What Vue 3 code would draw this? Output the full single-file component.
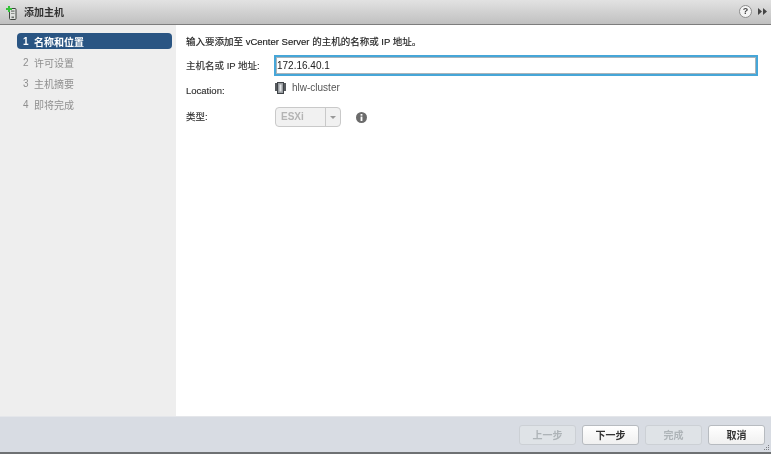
<script setup>
const steps = ['名称和位置', '许可设置', '主机摘要', '即将完成']
</script>

<template>
  <div class="dialog">
    <header class="titlebar">
      <svg class="host-icon" width="11" height="15" viewBox="0 0 11 15">
        <rect x="3.5" y="2.5" width="6.5" height="11" rx="1" fill="#dfe2df" stroke="#3f443f" />
        <rect x="5" y="4.5" width="3.5" height="1.2" fill="#6c716c" />
        <rect x="5" y="7" width="3.5" height="1" fill="#8e938e" />
        <rect x="5.5" y="10.5" width="2.5" height="1.6" fill="#6c716c" />
        <path d="M2 0h2v2h2v2H4v2H2V4H0V2h2z" fill="#35c23a" />
      </svg>
      <span class="title">添加主机</span>
      <span class="spacer"></span>
      <span class="help">?</span>
      <svg class="collapse" width="9" height="7" viewBox="0 0 9 7">
        <path d="M0 0l4 3.5L0 7zM5 0l4 3.5L5 7z" fill="#444" />
      </svg>
    </header>

    <div class="body">
      <nav class="sidebar">
        <div v-for="(s, i) in steps" :key="s" class="step" :class="{ active: i === 0 }">
          <span class="num">{{ i + 1 }}</span>
          <span>{{ s }}</span>
        </div>
      </nav>

      <main class="content">
        <p class="intro">输入要添加至 vCenter Server 的主机的名称或 IP 地址。</p>
        <div class="form">
          <label class="lbl raised">主机名或 IP 地址:</label>
          <input class="host-input" value="172.16.40.1" />

          <label class="lbl">Location:</label>
          <div class="loc">
            <svg width="11" height="12" viewBox="0 0 11 12">
              <rect x="0" y="1" width="3" height="8" fill="#55595d" />
              <rect x="8" y="1" width="3" height="8" fill="#55595d" />
              <rect x="2.5" y="0.5" width="6" height="11" fill="#9a9ea2" stroke="#3f4347" />
              <rect x="4.5" y="2.5" width="2" height="7" fill="#e4e6e8" />
            </svg>
            <span>hlw-cluster</span>
          </div>

          <label class="lbl raised">类型:</label>
          <div class="type-row">
            <div class="select">
              <span class="sel-text">ESXi</span>
              <span class="sel-arrow"></span>
            </div>
            <svg class="info" width="11" height="11" viewBox="0 0 12 12">
              <circle cx="6" cy="6" r="6" fill="#6b6b6b" />
              <rect x="5" y="2.2" width="2" height="1.8" fill="#fff" />
              <rect x="5" y="5" width="2" height="4.8" fill="#fff" />
            </svg>
          </div>
        </div>
      </main>
    </div>

    <footer class="footer">
      <button class="btn" disabled>上一步</button>
      <button class="btn">下一步</button>
      <button class="btn" disabled>完成</button>
      <button class="btn">取消</button>
      <svg class="grip" width="7" height="7" viewBox="0 0 7 7">
        <path d="M5 0h1v1H5zM3 2h1v1H3zM5 2h1v1H5zM1 4h1v1H1zM3 4h1v1H3zM5 4h1v1H5z" fill="#7d8085" />
      </svg>
    </footer>
  </div>
</template>

<style>
html, body { margin: 0; background: #fff; }
</style>

<style scoped>
.dialog {
  width: 771px;
  height: 454px;
  display: flex;
  flex-direction: column;
  box-sizing: border-box;
  border-bottom: 2px solid #6e7173;
  font: 10px "Liberation Sans", "Noto Sans CJK SC", sans-serif;
  color: #333;
  background: #fff;
  overflow: hidden;
  filter: blur(0.3px);
}
.titlebar {
  height: 25px;
  flex: none;
  box-sizing: border-box;
  display: flex;
  align-items: center;
  padding: 0 4px 2px 6px;
  background: linear-gradient(#e2e2e2, #c0c0c0);
  border-bottom: 1px solid #7d7d7d;
}
.host-icon { margin-right: 7px; margin-top: 5px; }
.title { font-weight: 700; color: #333; }
.spacer { flex: 1; }
.help {
  width: 11px;
  height: 11px;
  border-radius: 50%;
  background: #f4f4f4;
  border: 1px solid #8c8c8c;
  font-size: 9px;
  font-weight: 700;
  line-height: 11px;
  text-align: center;
  color: #444;
  margin-right: 6px;
}
.body { flex: 1; display: flex; min-height: 0; }
.sidebar {
  width: 176px;
  flex: none;
  box-sizing: border-box;
  background: #eee;
  padding: 8px 4px 0 17px;
}
.step {
  height: 16px;
  margin-bottom: 5px;
  display: flex;
  align-items: center;
  padding-left: 6px;
  border-radius: 4px;
  color: #8f8f8f;
}
.step.active {
  background: #2a5583;
  color: #fff;
  font-weight: 700;
}
.num { width: 11px; }
.content { flex: 1; padding: 10px 13px 0 10px; }
.intro { margin: 0; line-height: 14px; font-size: 9.5px; color: #222; -webkit-text-stroke: 0.15px #222; }
.form {
  margin-top: 6px;
  display: grid;
  grid-template-columns: 88px 1fr;
  grid-template-rows: 21px 22px 26px;
  align-items: center;
  row-gap: 3px;
}
.lbl { color: #333; font-size: 9.5px; -webkit-text-stroke: 0.15px #333; }
.lbl.raised { padding-bottom: 2px; white-space: nowrap; }
.host-input {
  width: 100%;
  height: 21px;
  box-sizing: border-box;
  border: 2px solid #46a6d8;
  outline: 1px solid #a9b4ba;
  outline-offset: -3px;
  padding: 0 0 1px 1px;
  font: 10px "Liberation Sans", sans-serif;
  color: #222;
}
.loc { display: flex; align-items: center; gap: 6px; margin-left: 1px; color: #555; margin-top: -5px; }
.type-row { display: flex; align-items: center; margin-left: 1px; }
.select {
  width: 66px;
  height: 20px;
  box-sizing: border-box;
  border: 1px solid #c9c9c9;
  border-radius: 4px;
  background: #f1f1f1;
  display: flex;
  align-items: center;
}
.sel-text {
  flex: 1;
  padding-left: 5px;
  color: #b4b4b4;
  font-weight: 700;
  line-height: 18px;
  border-right: 1px solid #c9c9c9;
}
.sel-arrow {
  width: 14px;
  display: flex;
  justify-content: center;
}
.sel-arrow::before {
  content: "";
  border: 3px solid transparent;
  border-top: 3px solid #999;
  border-bottom: 0;
}
.info { margin-left: 15px; }
.footer {
  height: 36px;
  flex: none;
  box-sizing: border-box;
  background: #d8dce3;
  border-top: 1px solid #e4e6ea;
  display: flex;
  justify-content: flex-end;
  align-items: center;
  gap: 6px;
  padding: 0 6px 0 0;
  position: relative;
}
.btn {
  width: 57px;
  height: 20px;
  padding: 0;
  box-sizing: border-box;
  border: 1px solid #b7bbc0;
  border-radius: 3px;
  background: linear-gradient(#fff, #f0f0f0);
  font: 700 10px "Liberation Sans", "Noto Sans CJK SC", sans-serif;
  color: #333;
}
.btn:disabled {
  background: #dfe3e7;
  border-color: #ccd0d5;
  color: #aeb4b8;
}
.grip { position: absolute; right: 1px; bottom: 0; }
</style>
